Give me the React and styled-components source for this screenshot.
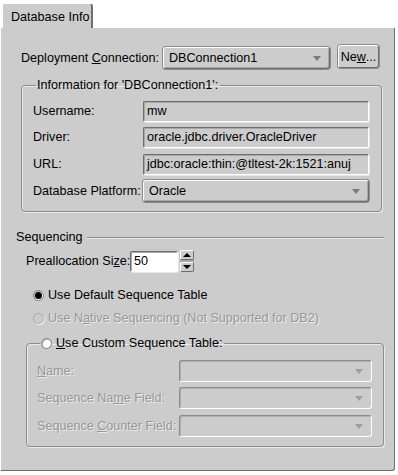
import React from "react";
import styled, { createGlobalStyle } from "styled-components";

const Global = createGlobalStyle`
  html, body { margin: 0; padding: 0; background: #ffffff; }
  body { font-family: "Liberation Sans", Arial, sans-serif; font-size: 12.6px; color: #000; }
`;

const Frame = styled.div`
  width: 398px;
  height: 475px;
  display: flex;
  flex-direction: column;
`;

const TabStrip = styled.div`
  height: 28px;
  display: flex;
  align-items: flex-end;
  padding-left: 2px;
`;

const Tab = styled.div`
  box-sizing: border-box;
  width: 91px;
  height: 25px;
  background: #cccccc;
  border-top: 1px solid #ffffff;
  border-left: 1px solid #ffffff;
  border-right: 2px solid #6e6e6e;
  border-top-right-radius: 4px;
  border-top-left-radius: 2px;
  padding: 4px 0 0 8px;
  line-height: 18px;
  white-space: nowrap;
`;

const Panel = styled.div`
  width: 393px;
  height: 442px;
  background: #cccccc;
  border-left: 1px solid #ffffff;
  border-right: 1px solid #6e6e6e;
  border-bottom: 1px solid #6e6e6e;
  border-bottom-right-radius: 3px;
  display: flex;
  flex-direction: column;
`;

const Row = styled.div`
  display: flex;
  align-items: center;
  height: ${p => p.h || 22}px;
  margin-top: ${p => p.mt || 0}px;
  padding-left: ${p => p.pl || 0}px;
`;

const Label = styled.span`
  width: ${p => (p.w ? `${p.w}px` : "auto")};
  flex: none;
  white-space: nowrap;
  color: ${p => (p.disabled ? "#979797" : "#000")};
  text-shadow: ${p => (p.disabled ? "1px 1px 0 #ececec" : "none")};
  u { text-decoration: underline; }
`;

const Field = styled.div`
  box-sizing: border-box;
  width: ${p => p.w}px;
  height: ${p => p.h || 21}px;
  margin-left: ${p => p.ml || 0}px;
  background: ${p => (p.white ? "#ffffff" : "#cccccc")};
  border-top: 1px solid #6e6e6e;
  border-left: 1px solid #6e6e6e;
  border-right: 1px solid #ffffff;
  border-bottom: 1px solid #ffffff;
  box-shadow: inset 1px 1px 0 #a8a8a8, 1px 1px 0 #e6e6e6;
  border-radius: 2px;
  padding-left: 3px;
  display: flex;
  align-items: center;
  white-space: nowrap;
  overflow: hidden;
`;

const Combo = styled.div`
  box-sizing: border-box;
  width: ${p => p.w}px;
  height: 22px;
  margin-left: ${p => p.ml || 0}px;
  background: #cccccc;
  border-top: 1px solid ${p => (p.disabled ? "#8a8a8a" : "#ffffff")};
  border-left: 1px solid ${p => (p.disabled ? "#8a8a8a" : "#ffffff")};
  border-right: 1px solid ${p => (p.disabled ? "#ffffff" : "#6e6e6e")};
  border-bottom: 1px solid ${p => (p.disabled ? "#ffffff" : "#6e6e6e")};
  box-shadow: ${p =>
    p.disabled
      ? "inset 1px 1px 0 #b0b0b0"
      : "0 0 0 1px #8a8a8a, inset -1px -1px 0 #a8a8a8"};
  border-radius: 3px;
  display: flex;
  align-items: center;
  padding-left: 5px;
  padding-right: 8px;
`;

const ComboText = styled.span`
  flex: 1;
  white-space: nowrap;
`;

const Arrow = styled.span`
  width: 0;
  height: 0;
  border-left: 4px solid transparent;
  border-right: 4px solid transparent;
  border-top: 5px solid ${p => (p.disabled ? "#9e9e9e" : "#7a7a7a")};
`;

const Button = styled.div`
  box-sizing: border-box;
  width: 41px;
  height: 23px;
  margin-left: 8px;
  margin-top: -3px;
  border-top: 1px solid #ffffff;
  border-left: 1px solid #ffffff;
  border-right: 1px solid #6e6e6e;
  border-bottom: 1px solid #6e6e6e;
  box-shadow: 0 0 0 1px #8a8a8a;
  border-radius: 3px;
  display: flex;
  align-items: center;
  justify-content: center;
`;

const Group = styled.fieldset`
  box-sizing: border-box;
  margin: ${p => p.m};
  width: ${p => p.w}px;
  height: ${p => p.h}px;
  border: 1px solid #8c8c8c;
  box-shadow: 1px 1px 0 #eaeaea, inset 1px 1px 0 #eaeaea;
  border-radius: 4px;
  padding: ${p => p.pad};
  display: flex;
  flex-direction: column;
  min-width: 0;
`;

const Legend = styled.legend`
  padding: 0 2px 0 1px;
  margin-left: ${p => p.ml || 3}px;
  height: 14px;
  line-height: 14px;
  display: flex;
  align-items: center;
`;

const SectionHead = styled.div`
  display: flex;
  align-items: center;
  margin: 17px 10px 0 15px;
  height: 16px;
  gap: 4px;
`;

const Rule = styled.div`
  flex: 1;
  height: 1px;
  background: #8c8c8c;
  box-shadow: 0 1px 0 #eaeaea;
`;

const Spinner = styled.div`
  display: flex;
  flex-direction: column;
  justify-content: space-between;
  height: 22px;
  margin-left: 2px;
  width: 14px;
  background: linear-gradient(#cccccc 0 9px, #a8a8a8 9px 13px, #cccccc 13px);
`;

const SpinBtn = styled.div`
  box-sizing: border-box;
  width: 14px;
  height: 10px;
  border-top: 1px solid #ffffff;
  border-left: 1px solid #ffffff;
  border-right: 1px solid #6e6e6e;
  border-bottom: 1px solid #6e6e6e;
  background: #cccccc;
  border-radius: 2px;
  display: flex;
  align-items: center;
  justify-content: center;
`;

const SpinArrow = styled.span`
  width: 0;
  height: 0;
  border-left: 4px solid transparent;
  border-right: 4px solid transparent;
  ${p =>
    p.up
      ? "border-bottom: 4px solid #000;"
      : "border-top: 4px solid #000;"}
`;

const Radio = styled.span`
  box-sizing: border-box;
  width: 11px;
  height: 11px;
  border-radius: 50%;
  margin-right: 4px;
  flex: none;
  background: ${p => (p.disabled ? "#cccccc" : "#ffffff")};
  border: 1px solid ${p => (p.disabled ? "#a8a8a8" : "#7a7a7a")};
  box-shadow: ${p => (p.disabled ? "1px 1px 0 #eeeeee" : "inset 1px 1px 0 #b8b8b8")};
  display: flex;
  align-items: center;
  justify-content: center;
  &::after {
    content: "";
    display: ${p => (p.checked ? "block" : "none")};
    width: 7px;
    height: 7px;
    border-radius: 50%;
    background: #000;
  }
`;

const GroupRow = styled.div`
  display: flex;
  align-items: center;
  height: 22px;
  margin-top: ${p => p.mt || 0}px;
`;

export default function App() {
  return (
    <Frame>
      <Global />
      <TabStrip>
        <Tab>Database Info</Tab>
      </TabStrip>
      <Panel>
        <Row h={22} mt={19} pl={20}>
          <Label w={142}>
            Deployment <u>C</u>onnection:
          </Label>
          <Combo w={167}>
            <ComboText>DBConnection1</ComboText>
            <Arrow />
          </Combo>
          <Button>
            Ne<u>w</u>...
          </Button>
        </Row>

        <Group m="9px 0 0 20px" w={361} h={134} pad="8px 12px 0 11px">
          <Legend>Information for 'DBConnection1':</Legend>
          <GroupRow>
            <Label w={110}>Username:</Label>
            <Field w={226}>mw</Field>
          </GroupRow>
          <GroupRow mt={4}>
            <Label w={110}>Driver:</Label>
            <Field w={226}>oracle.jdbc.driver.OracleDriver</Field>
          </GroupRow>
          <GroupRow mt={5}>
            <Label w={110}>URL:</Label>
            <Field w={226}>jdbc:oracle:thin:@tltest-2k:1521:anuj</Field>
          </GroupRow>
          <GroupRow mt={5}>
            <Label w={110}>Database Platform:</Label>
            <Combo w={226}>
              <ComboText>Oracle</ComboText>
              <Arrow />
            </Combo>
          </GroupRow>
        </Group>

        <SectionHead>
          <Label>Sequencing</Label>
          <Rule />
        </SectionHead>

        <Row h={22} mt={5} pl={25}>
          <Label w={104}>
            Preallocation Si<u>z</u>e:
          </Label>
          <Field w={48} white>50</Field>
          <Spinner>
            <SpinBtn>
              <SpinArrow up />
            </SpinBtn>
            <SpinBtn>
              <SpinArrow />
            </SpinBtn>
          </Spinner>
        </Row>

        <Row h={16} mt={15} pl={32}>
          <Radio checked />
          <Label>Use Default Sequence Table</Label>
        </Row>
        <Row h={16} mt={7} pl={32}>
          <Radio disabled />
          <Label disabled>
            Use N<u>a</u>tive Sequencing (Not Supported for DB2)
          </Label>
        </Row>

        <Group m="10px 0 0 25px" w={358} h={111} pad="10px 11px 0 10px">
          <Legend ml={0}>
            <Radio />
            <Label>
              <u>U</u>se Custom Sequence Table:
            </Label>
          </Legend>
          <GroupRow>
            <Label w={142} disabled>
              <u>N</u>ame:
            </Label>
            <Combo w={194} disabled>
              <ComboText />
              <Arrow disabled />
            </Combo>
          </GroupRow>
          <GroupRow mt={5}>
            <Label w={142} disabled>
              Sequence Na<u>m</u>e Field:
            </Label>
            <Combo w={194} disabled>
              <ComboText />
              <Arrow disabled />
            </Combo>
          </GroupRow>
          <GroupRow mt={6}>
            <Label w={142} disabled>
              Sequence <u>C</u>ounter Field:
            </Label>
            <Combo w={194} disabled>
              <ComboText />
              <Arrow disabled />
            </Combo>
          </GroupRow>
        </Group>
      </Panel>
    </Frame>
  );
}
